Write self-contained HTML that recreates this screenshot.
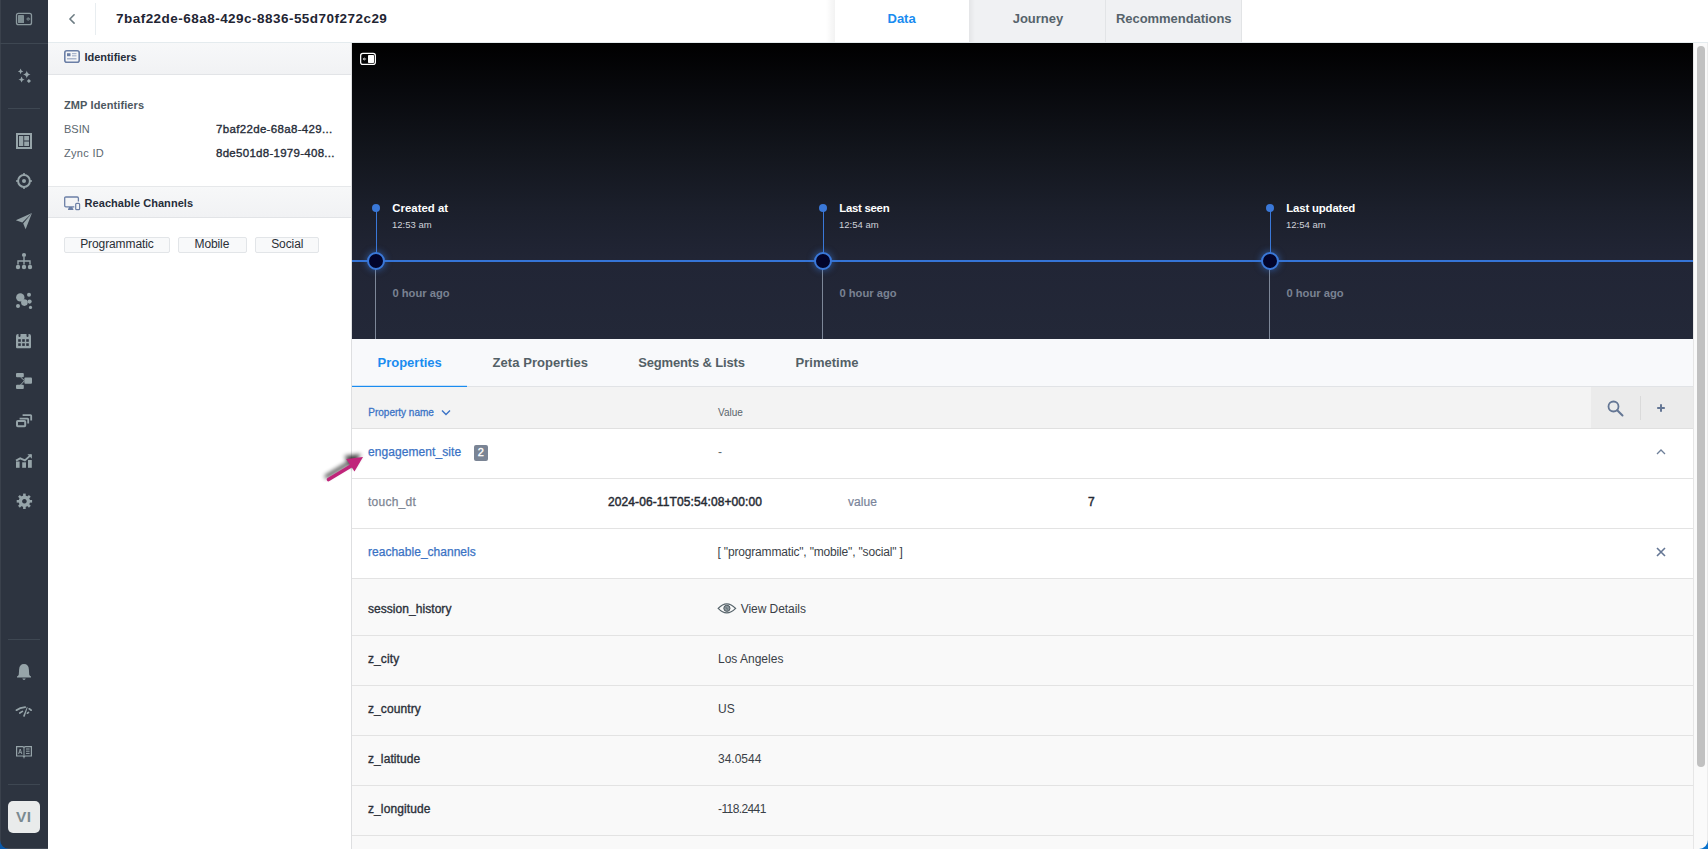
<!DOCTYPE html>
<html><head><meta charset="utf-8">
<style>
*{box-sizing:border-box;margin:0;padding:0}
html,body{width:1708px;height:849px;overflow:hidden;background:#fff;font-family:"Liberation Sans",sans-serif;position:relative}
.abs{position:absolute}
.t{position:absolute;white-space:nowrap;line-height:1}
svg{position:absolute;overflow:visible}
</style></head><body>
<div class="abs" style="left:0px;top:0px;width:48px;height:849px;background:#2d3440;"></div>
<div class="abs" style="left:0px;top:0px;width:1px;height:849px;background:#3a414c;"></div>
<div class="abs" style="left:48px;top:0px;width:1660px;height:42px;background:#fff;"></div>
<div class="abs" style="left:48px;top:42px;width:1660px;height:1px;background:#e4ebee;"></div>
<div class="abs" style="left:48px;top:43px;width:303px;height:806px;background:#fff;"></div>
<div class="abs" style="left:351px;top:43px;width:1px;height:806px;background:#dedfe1;"></div>
<div class="abs" style="left:48px;top:43px;width:303px;height:31px;background:linear-gradient(#f7f8f9,#f1f2f4);"></div>
<div class="abs" style="left:48px;top:74px;width:303px;height:1px;background:#e2e4e7;"></div>
<div class="abs" style="left:48px;top:186px;width:303px;height:31px;background:linear-gradient(#f7f8f9,#f1f2f4);"></div>
<div class="abs" style="left:48px;top:186px;width:303px;height:1px;background:#e6e8ea;"></div>
<div class="abs" style="left:48px;top:217px;width:303px;height:1px;background:#e2e4e7;"></div>
<div class="abs" style="left:352px;top:43px;width:1341px;height:296px;background:linear-gradient(#000 0%,#08090d 16%,#12151c 36%,#1b1f2b 56%,#212535 73%,#232838 100%);"></div>
<div class="abs" style="left:352px;top:339px;width:1341px;height:48px;background:#f8f9fb;"></div>
<div class="abs" style="left:352px;top:386px;width:1341px;height:1px;background:#e1e3e6;"></div>
<div class="abs" style="left:352px;top:386px;width:115px;height:1px;background:#1a8cf0;"></div>
<div class="abs" style="left:352px;top:385px;width:115px;height:1px;background:#c9e1f8;"></div>
<div class="abs" style="left:352px;top:387px;width:1341px;height:41px;background:#f3f3f3;"></div>
<div class="abs" style="left:1591px;top:387px;width:102px;height:41px;background:#ebebeb;"></div>
<div class="abs" style="left:1640px;top:396px;width:1px;height:24px;background:#dadada;"></div>
<div class="abs" style="left:352px;top:428px;width:1341px;height:1px;background:#e0e0e0;"></div>
<div class="abs" style="left:352px;top:429px;width:1341px;height:49px;background:#fff;"></div>
<div class="abs" style="left:352px;top:478px;width:1341px;height:1px;background:#e3e3e3;"></div>
<div class="abs" style="left:352px;top:479px;width:1341px;height:49px;background:#fff;"></div>
<div class="abs" style="left:352px;top:528px;width:1341px;height:1px;background:#e3e3e3;"></div>
<div class="abs" style="left:352px;top:529px;width:1341px;height:49px;background:#fff;"></div>
<div class="abs" style="left:352px;top:578px;width:1341px;height:1px;background:#e3e3e3;"></div>
<div class="abs" style="left:352px;top:579px;width:1341px;height:56px;background:#f9f9f9;"></div>
<div class="abs" style="left:352px;top:635px;width:1341px;height:1px;background:#e3e3e3;"></div>
<div class="abs" style="left:352px;top:636px;width:1341px;height:49px;background:#f9f9f9;"></div>
<div class="abs" style="left:352px;top:685px;width:1341px;height:1px;background:#e3e3e3;"></div>
<div class="abs" style="left:352px;top:686px;width:1341px;height:49px;background:#f9f9f9;"></div>
<div class="abs" style="left:352px;top:735px;width:1341px;height:1px;background:#e3e3e3;"></div>
<div class="abs" style="left:352px;top:736px;width:1341px;height:49px;background:#f9f9f9;"></div>
<div class="abs" style="left:352px;top:785px;width:1341px;height:1px;background:#e3e3e3;"></div>
<div class="abs" style="left:352px;top:786px;width:1341px;height:49px;background:#f9f9f9;"></div>
<div class="abs" style="left:352px;top:835px;width:1341px;height:1px;background:#e3e3e3;"></div>
<div class="abs" style="left:352px;top:836px;width:1341px;height:13px;background:#f9f9f9;"></div>
<div class="abs" style="left:352px;top:849px;width:1341px;height:1px;background:#e3e3e3;"></div>
<div class="abs" style="left:1693px;top:43px;width:1px;height:806px;background:#e6e6e6;"></div>
<div class="abs" style="left:1694px;top:43px;width:14px;height:806px;background:#fafafa;"></div>
<div class="abs" style="left:1707px;top:43px;width:1px;height:806px;background:#ececec;"></div>
<div class="abs" style="left:1697px;top:46px;width:8px;height:721px;background:#c1c1c1;border-radius:4px;"></div>
<svg style="left:0;top:0" width="48" height="849" viewBox="0 0 48 849"><rect x="16.5" y="13.3" width="15" height="11.4" rx="2" fill="none" stroke="#96a4a9" stroke-width="1.3" opacity="0.9"/><rect x="18" y="15.1" width="6" height="7.9" rx="0.6" fill="#7f8e93"/><path d="M26.5 19 H28.3 M27.6 17.4 L29.6 19 L27.6 20.6" fill="none" stroke="#6e7c82" stroke-width="1.3"/><rect x="0" y="43" width="48" height="1" fill="#3e4752"/><path d="M20.6 68.60000000000001 Q20.924000000000003 71.06400000000001 23.3 71.4 Q20.924000000000003 71.736 20.6 74.2 Q20.276 71.736 17.900000000000002 71.4 Q20.276 71.06400000000001 20.6 68.60000000000001Z M26.8 70.6 Q27.244 74.11999999999999 30.5 74.6 Q27.244 75.08 26.8 78.6 Q26.356 75.08 23.1 74.6 Q26.356 74.11999999999999 26.8 70.6Z M21.6 76.4 Q21.972 79.04 24.700000000000003 79.4 Q21.972 79.76 21.6 82.4 Q21.228 79.76 18.5 79.4 Q21.228 79.04 21.6 76.4Z" fill="#96a4a9"/><path d="M28.9 78.9 L31 81 L28.9 83.1 L26.8 81Z" fill="#96a4a9"/><rect x="8" y="108" width="32" height="1" fill="#3e4752"/><rect x="17" y="134" width="14" height="14" fill="none" stroke="#96a4a9" stroke-width="2"/><rect x="19" y="136" width="4.3" height="10" fill="#96a4a9"/><rect x="24.2" y="136" width="4.8" height="4.5" fill="#96a4a9"/><rect x="24.2" y="141.5" width="4.8" height="4.5" fill="#96a4a9"/><circle cx="24" cy="181" r="5.9" fill="none" stroke="#96a4a9" stroke-width="2"/><circle cx="24" cy="181" r="2" fill="#96a4a9"/><path d="M24 173 V176 M24 186 V189 M16 181 H19 M29 181 H32" stroke="#96a4a9" stroke-width="1.6"/><path d="M32 213 L15.8 220.3 L22.3 222.6Z" fill="#96a4a9"/><path d="M32 213 L23.2 223.6 L25.6 229.2Z" fill="#96a4a9"/><circle cx="24" cy="255" r="2.1" fill="#96a4a9"/><circle cx="18" cy="267" r="2.2" fill="#96a4a9"/><circle cx="24" cy="267" r="2.2" fill="#96a4a9"/><circle cx="30" cy="267" r="2.2" fill="#96a4a9"/><path d="M24 257 V264.5 M18 264.5 V261 H30 V264.5" fill="none" stroke="#96a4a9" stroke-width="1.4"/><circle cx="20.3" cy="297.4" r="4.2" fill="#96a4a9"/><circle cx="24.4" cy="302.6" r="3.3" fill="#96a4a9"/><circle cx="29" cy="294.8" r="2" fill="#96a4a9"/><circle cx="29.6" cy="301.6" r="2.1" fill="#96a4a9"/><circle cx="18" cy="306" r="2" fill="#96a4a9"/><circle cx="30.5" cy="307.4" r="1.6" fill="#96a4a9"/><path d="M16 336 Q16 334 18 334 H18.5 V336 A1 1 0 0 0 20.5 336 V334 H26.5 V336 A1 1 0 0 0 28.5 336 V334 H29 Q31 334 31 336 V347 Q31 348.2 30 348.2 H17 Q16 348.2 16 347Z" fill="#96a4a9"/><rect x="18.2" y="339.2" width="2.6" height="2.6" fill="#2d3440"/><rect x="22.2" y="339.2" width="2.6" height="2.6" fill="#2d3440"/><rect x="26.2" y="339.2" width="2.6" height="2.6" fill="#2d3440"/><rect x="18.2" y="343.3" width="2.6" height="2.6" fill="#2d3440"/><rect x="22.2" y="343.3" width="2.6" height="2.6" fill="#2d3440"/><rect x="26.2" y="343.3" width="2.6" height="2.6" fill="#2d3440"/><rect x="16" y="373" width="7.8" height="4.2" rx="1" fill="#96a4a9"/><rect x="16" y="384.8" width="7.8" height="4.2" rx="1" fill="#96a4a9"/><rect x="24.4" y="377.6" width="7.6" height="6.2" rx="1" fill="#96a4a9"/><path d="M20.5 377 L24.5 380.7 L20.5 385" fill="none" stroke="#96a4a9" stroke-width="1"/><rect x="17" y="421" width="8.2" height="5.2" rx="0.8" fill="none" stroke="#96a4a9" stroke-width="2"/><path d="M19.6 418.6 H27.6 Q28.2 418.6 28.2 419.2 V423.6" fill="none" stroke="#96a4a9" stroke-width="1.8"/><path d="M22.6 415.2 H30.6 Q31.2 415.2 31.2 415.8 V420.4" fill="none" stroke="#96a4a9" stroke-width="1.8"/><rect x="16" y="461.5" width="3.6" height="6.3" fill="#96a4a9"/><rect x="22.2" y="462.3" width="3.8" height="5.5" fill="#96a4a9"/><rect x="28" y="460" width="3.8" height="7.8" fill="#96a4a9"/><path d="M16 460.6 L20.2 458.4 L24.9 460.4 L31 454.9" fill="none" stroke="#96a4a9" stroke-width="1.9"/><path d="M27.4 454.3 H31.9 V458.8Z" fill="#96a4a9"/><rect x="23.1" y="493.6" width="2.6" height="3.6" fill="#96a4a9" transform="rotate(0 24.4 501.3)"/><rect x="23.1" y="493.6" width="2.6" height="3.6" fill="#96a4a9" transform="rotate(45 24.4 501.3)"/><rect x="23.1" y="493.6" width="2.6" height="3.6" fill="#96a4a9" transform="rotate(90 24.4 501.3)"/><rect x="23.1" y="493.6" width="2.6" height="3.6" fill="#96a4a9" transform="rotate(135 24.4 501.3)"/><rect x="23.1" y="493.6" width="2.6" height="3.6" fill="#96a4a9" transform="rotate(180 24.4 501.3)"/><rect x="23.1" y="493.6" width="2.6" height="3.6" fill="#96a4a9" transform="rotate(225 24.4 501.3)"/><rect x="23.1" y="493.6" width="2.6" height="3.6" fill="#96a4a9" transform="rotate(270 24.4 501.3)"/><rect x="23.1" y="493.6" width="2.6" height="3.6" fill="#96a4a9" transform="rotate(315 24.4 501.3)"/><path d="M24.4 495.6 A5.7 5.7 0 1 1 24.39 495.6Z M24.4 499 A2.3 2.3 0 1 0 24.41 499Z" fill="#96a4a9" fill-rule="evenodd"/><rect x="8" y="639" width="32" height="1" fill="#3e4752"/><rect x="8" y="784" width="32" height="1" fill="#3e4752"/><path d="M24 664 Q28.6 664 28.9 669.5 L29.2 674.5 Q29.6 676 31 676.6 V677.6 H17 V676.6 Q18.4 676 18.8 674.5 L19.1 669.5 Q19.4 664 24 664Z" fill="#96a4a9"/><path d="M22.3 678.6 H25.7 Q25.3 680 24 680 Q22.7 680 22.3 678.6Z" fill="#96a4a9"/><path d="M16.4 710.2 Q19.8 707.6 25.2 707.1 M29.2 708.8 L31.2 710.2 M19.8 713 L22.4 711.4 M27.4 713.2 L28.5 712.4" fill="none" stroke="#96a4a9" stroke-width="1.7" stroke-linecap="round"/><path d="M23 716.3 Q23.9 717.2 24.8 716.4 L27.6 707.4 Q27.2 706.9 26.8 707.3Z" fill="#96a4a9"/><path d="M16.6 746.6 H22.5 Q24 746.6 24 748 Q24 746.6 25.5 746.6 H31.4 V756 H25.5 Q24.3 756 24 757 Q23.7 756 22.5 756 H16.6Z" fill="none" stroke="#96a4a9" stroke-width="1.2"/><path d="M24 748 V756" stroke="#96a4a9" stroke-width="1"/><path d="M18.6 754 L20.2 749 L21.8 754 M19.2 752.3 H21.2" fill="none" stroke="#96a4a9" stroke-width="0.9"/><path d="M26 749 H29.6 M26 751.2 H29.6 M26 753.4 H29.6" stroke="#96a4a9" stroke-width="1"/></svg>
<div class="abs" style="left:8px;top:800.5px;width:32px;height:32px;background:#e9ebeb;border-radius:5px;"></div>
<div class="t" style="left:16px;top:808.80px;font-size:15.5px;color:#7a8a91;font-weight:700;letter-spacing:0.4px;">VI</div>
<svg style="left:66px;top:12px" width="12" height="14" viewBox="0 0 12 14"><path d="M8.1 2.8 L3.9 6.95 L8.1 11.1" fill="none" stroke="#6d7c83" stroke-width="1.6" stroke-linecap="round" stroke-linejoin="round"/></svg>
<div class="abs" style="left:95px;top:3px;width:1px;height:32px;background:#e8edf0;"></div>
<div class="t" style="left:116px;top:12.00px;font-size:13.5px;color:#1f2533;font-weight:700;letter-spacing:0.47px;">7baf22de-68a8-429c-8836-55d70f272c29</div>
<div class="abs" style="left:826px;top:0px;width:9px;height:42px;background:linear-gradient(to right,rgba(0,0,0,0),rgba(0,0,0,0.05));"></div>
<div class="abs" style="left:835px;top:0px;width:134px;height:42px;background:#fff;"></div>
<div class="abs" style="left:969px;top:0px;width:272px;height:42px;background:#f0f1f3;"></div>
<div class="abs" style="left:969px;top:0px;width:6px;height:42px;background:linear-gradient(to right,rgba(0,0,0,0.05),rgba(0,0,0,0));"></div>
<div class="abs" style="left:1105px;top:0px;width:1px;height:42px;background:#e2e4e6;"></div>
<div class="abs" style="left:1241px;top:0px;width:1px;height:42px;background:#e2e4e6;"></div>
<div class="t" style="left:887.5px;top:11.80px;font-size:13px;color:#1a8cf0;font-weight:700;">Data</div>
<div class="t" style="left:1012.7px;top:11.80px;font-size:13px;color:#56636b;font-weight:700;">Journey</div>
<div class="t" style="left:1116px;top:11.80px;font-size:13px;color:#56636b;font-weight:700;letter-spacing:-0.05px;">Recommendations</div>
<svg style="left:64px;top:50px" width="16" height="13" viewBox="0 0 16 13"><rect x="0.8" y="0.8" width="14.4" height="11.4" rx="2" fill="none" stroke="#6b7fa6" stroke-width="1.6"/><rect x="3" y="3.2" width="3.5" height="3" fill="#6b7fa6"/><rect x="8" y="3" width="4.5" height="1.2" fill="#a9b5cc"/><rect x="8" y="5.2" width="4.5" height="1.2" fill="#a9b5cc"/><rect x="3" y="8" width="9.5" height="1.5" fill="#a9b5cc"/></svg>
<div class="t" style="left:84.6px;top:52.00px;font-size:11px;color:#262d3a;font-weight:700;letter-spacing:-0.05px;">Identifiers</div>
<div class="t" style="left:64px;top:100.00px;font-size:11px;color:#4d5860;font-weight:700;letter-spacing:0.1px;">ZMP Identifiers</div>
<div class="t" style="left:64px;top:124.00px;font-size:11px;color:#5c676f;">BSIN</div>
<div class="t" style="left:216px;top:123.50px;font-size:11.5px;color:#262c38;letter-spacing:0.33px;-webkit-text-stroke:0.35px #262c38;">7baf22de-68a8-429...</div>
<div class="t" style="left:64px;top:148.30px;font-size:11px;color:#5c676f;letter-spacing:0.3px;">Zync ID</div>
<div class="t" style="left:216px;top:148.00px;font-size:11.5px;color:#262c38;letter-spacing:0.28px;-webkit-text-stroke:0.35px #262c38;">8de501d8-1979-408...</div>
<svg style="left:64px;top:196px" width="17" height="15" viewBox="0 0 17 15"><path d="M10.3 10.8 H1.9 Q0.7 10.8 0.7 9.6 V2.2 Q0.7 1 1.9 1 H13.2 Q14.4 1 14.4 2.2 V5.6" fill="none" stroke="#6b7fa6" stroke-width="1.3"/><path d="M5 11 H8.4 L8.9 13 H4.5Z" fill="#6b7fa6"/><rect x="4" y="12.6" width="5.4" height="1.3" rx="0.5" fill="#6b7fa6"/><rect x="11.7" y="7.3" width="3.9" height="6.4" rx="1" fill="none" stroke="#6b7fa6" stroke-width="1.2"/></svg>
<div class="t" style="left:84.6px;top:198.00px;font-size:11px;color:#262d3a;font-weight:700;letter-spacing:0.05px;">Reachable Channels</div>
<div class="abs" style="left:64px;top:237px;width:106px;height:16px;background:#f8f9fa;border:1px solid #e2e5e8;border-radius:2px;"></div>
<div class="t" style="left:80.2px;top:238.00px;font-size:12px;color:#2a2f36;letter-spacing:-0.1px;">Programmatic</div>
<div class="abs" style="left:178px;top:237px;width:69px;height:16px;background:#f8f9fa;border:1px solid #e2e5e8;border-radius:2px;"></div>
<div class="t" style="left:194.5px;top:238.00px;font-size:12px;color:#2a2f36;letter-spacing:-0.1px;">Mobile</div>
<div class="abs" style="left:255px;top:237px;width:64px;height:16px;background:#f8f9fa;border:1px solid #e2e5e8;border-radius:2px;"></div>
<div class="t" style="left:271.2px;top:238.00px;font-size:12px;color:#2a2f36;letter-spacing:-0.1px;">Social</div>
<div class="abs" style="left:352px;top:260px;width:1341px;height:2px;background:#3574d6;"></div>
<div class="abs" style="left:376px;top:208px;width:1px;height:52px;background:#3a78d8;"></div>
<div class="abs" style="left:375px;top:262px;width:1px;height:77px;background:#7d8798;"></div>
<div class="abs" style="left:372px;top:204px;width:8px;height:8px;border-radius:50%;background:#3a78d8"></div>
<div class="abs" style="left:367px;top:252px;width:18px;height:18px;border-radius:50%;background:#02042a;border:2px solid #3a78d8;box-shadow:0 0 6px 1px rgba(58,120,216,0.5)"></div>
<div class="t" style="left:392.3px;top:203.00px;font-size:11.4px;color:#ffffff;font-weight:700;">Created at</div>
<div class="t" style="left:392px;top:220.10px;font-size:9.5px;color:#cfd2d9;">12:53 am</div>
<div class="t" style="left:392.4px;top:287.80px;font-size:11.2px;color:#7a8292;font-weight:700;">0 hour ago</div>
<div class="abs" style="left:823px;top:208px;width:1px;height:52px;background:#3a78d8;"></div>
<div class="abs" style="left:822px;top:262px;width:1px;height:77px;background:#7d8798;"></div>
<div class="abs" style="left:819px;top:204px;width:8px;height:8px;border-radius:50%;background:#3a78d8"></div>
<div class="abs" style="left:814px;top:252px;width:18px;height:18px;border-radius:50%;background:#02042a;border:2px solid #3a78d8;box-shadow:0 0 6px 1px rgba(58,120,216,0.5)"></div>
<div class="t" style="left:839.3px;top:203.00px;font-size:11.4px;color:#ffffff;font-weight:700;letter-spacing:-0.28px;">Last seen</div>
<div class="t" style="left:839px;top:220.10px;font-size:9.5px;color:#cfd2d9;">12:54 am</div>
<div class="t" style="left:839.4px;top:287.80px;font-size:11.2px;color:#7a8292;font-weight:700;">0 hour ago</div>
<div class="abs" style="left:1270px;top:208px;width:1px;height:52px;background:#3a78d8;"></div>
<div class="abs" style="left:1269px;top:262px;width:1px;height:77px;background:#7d8798;"></div>
<div class="abs" style="left:1266px;top:204px;width:8px;height:8px;border-radius:50%;background:#3a78d8"></div>
<div class="abs" style="left:1261px;top:252px;width:18px;height:18px;border-radius:50%;background:#02042a;border:2px solid #3a78d8;box-shadow:0 0 6px 1px rgba(58,120,216,0.5)"></div>
<div class="t" style="left:1286.3px;top:203.00px;font-size:11.4px;color:#ffffff;font-weight:700;letter-spacing:-0.17px;">Last updated</div>
<div class="t" style="left:1286px;top:220.10px;font-size:9.5px;color:#cfd2d9;">12:54 am</div>
<div class="t" style="left:1286.4px;top:287.80px;font-size:11.2px;color:#7a8292;font-weight:700;">0 hour ago</div>
<svg style="left:360px;top:52px" width="17" height="14" viewBox="0 0 17 14"><rect x="0.65" y="1.45" width="14.7" height="10.9" rx="2.2" fill="none" stroke="#fff" stroke-width="1.25"/><rect x="8" y="3" width="6" height="8" rx="0.7" fill="#fff"/><path d="M2.6 7 L4.6 5.2 V8.8Z" fill="#ddd"/><path d="M4.4 7 H6.2" stroke="#999" stroke-width="1.4"/></svg>
<div class="t" style="left:377.5px;top:355.90px;font-size:13px;color:#1a8cf0;font-weight:700;">Properties</div>
<div class="t" style="left:492.6px;top:355.90px;font-size:13px;color:#536066;font-weight:700;letter-spacing:0.05px;">Zeta Properties</div>
<div class="t" style="left:638.2px;top:355.90px;font-size:13px;color:#536066;font-weight:700;letter-spacing:-0.15px;">Segments &amp; Lists</div>
<div class="t" style="left:795.6px;top:355.90px;font-size:13px;color:#536066;font-weight:700;">Primetime</div>
<div class="t" style="left:368.3px;top:408.20px;font-size:10px;color:#3b73c6;-webkit-text-stroke:0.3px #3b73c6;">Property name</div>
<svg style="left:441px;top:409px" width="10" height="7" viewBox="0 0 10 7"><path d="M1 1.5 L5 5.5 L9 1.5" fill="none" stroke="#3b73c6" stroke-width="1.4"/></svg>
<div class="t" style="left:718px;top:408.20px;font-size:10px;color:#5a646b;">Value</div>
<svg style="left:1607px;top:400px" width="17" height="17" viewBox="0 0 17 17"><circle cx="6.5" cy="6.5" r="5" fill="none" stroke="#647694" stroke-width="1.8"/><path d="M10.2 10.2 L15.5 15.5" stroke="#647694" stroke-width="2" stroke-linecap="round"/></svg>
<svg style="left:1656px;top:403px" width="10" height="10" viewBox="0 0 10 10"><path d="M5 1.2 V8.8 M1.2 5 H8.8" stroke="#647694" stroke-width="2"/></svg>
<div class="t" style="left:368px;top:446.00px;font-size:12px;color:#3a72c4;letter-spacing:0.08px;-webkit-text-stroke:0.25px #3a72c4;">engagement_site</div>
<div class="abs" style="left:474px;top:445px;width:14px;height:16px;background:#7a8494;border-radius:2px;"></div>
<div class="t" style="left:477.8px;top:447.00px;font-size:11px;color:#fff;-webkit-text-stroke:0.35px #fff;">2</div>
<div class="t" style="left:718px;top:446.00px;font-size:12px;color:#5d666d;">-</div>
<svg style="left:1656px;top:449px" width="10" height="6" viewBox="0 0 10 6"><path d="M1 5 L5 1 L9 5" fill="none" stroke="#6e7f99" stroke-width="1.3"/></svg>
<div class="t" style="left:368px;top:496.00px;font-size:12px;color:#7d8593;letter-spacing:0.25px;-webkit-text-stroke:0.25px #7d8593;">touch_dt</div>
<div class="t" style="left:608px;top:496.00px;font-size:12px;color:#262a33;letter-spacing:0.1px;-webkit-text-stroke:0.45px #262a33;">2024-06-11T05:54:08+00:00</div>
<div class="t" style="left:848px;top:496.00px;font-size:12px;color:#7a849a;letter-spacing:0.05px;-webkit-text-stroke:0.2px #7a849a;">value</div>
<div class="t" style="left:1088px;top:496.00px;font-size:12px;color:#262a33;-webkit-text-stroke:0.45px #262a33;">7</div>
<div class="t" style="left:368px;top:546.00px;font-size:12px;color:#3a72c4;letter-spacing:0.02px;-webkit-text-stroke:0.25px #3a72c4;">reachable_channels</div>
<div class="t" style="left:717.5px;top:546.00px;font-size:12px;color:#3a3f47;letter-spacing:-0.17px;">[ &quot;programmatic&quot;, &quot;mobile&quot;, &quot;social&quot; ]</div>
<svg style="left:1656px;top:547px" width="10" height="10" viewBox="0 0 10 10"><path d="M1 1 L9 9 M9 1 L1 9" stroke="#647694" stroke-width="1.6"/></svg>
<div class="t" style="left:368px;top:603.00px;font-size:12px;color:#2b3039;letter-spacing:0.05px;-webkit-text-stroke:0.35px #2b3039;">session_history</div>
<svg style="left:717px;top:602px" width="20" height="14" viewBox="0 0 20 14"><path d="M1.2 6.4 Q9.7 -2.6 18.6 6.4 Q9.7 15.4 1.2 6.4Z" fill="none" stroke="#56636a" stroke-width="1.25"/><circle cx="9.9" cy="6.3" r="3.1" fill="#8a959b" stroke="#4f5b61" stroke-width="1"/><path d="M8.6 5.2 L10.9 7.4" stroke="#4f5b61" stroke-width="0.8"/></svg>
<div class="t" style="left:740.7px;top:603.00px;font-size:12px;color:#3a3f47;letter-spacing:-0.05px;">View Details</div>
<div class="t" style="left:368px;top:653.00px;font-size:12px;color:#2b3039;letter-spacing:0.1px;-webkit-text-stroke:0.35px #2b3039;">z_city</div>
<div class="t" style="left:718px;top:653.00px;font-size:12px;color:#3a3f47;">Los Angeles</div>
<div class="t" style="left:368px;top:703.00px;font-size:12px;color:#2b3039;letter-spacing:0.1px;-webkit-text-stroke:0.35px #2b3039;">z_country</div>
<div class="t" style="left:718px;top:703.00px;font-size:12px;color:#3a3f47;">US</div>
<div class="t" style="left:368px;top:753.00px;font-size:12px;color:#2b3039;letter-spacing:0.1px;-webkit-text-stroke:0.35px #2b3039;">z_latitude</div>
<div class="t" style="left:718px;top:753.00px;font-size:12px;color:#3a3f47;">34.0544</div>
<div class="t" style="left:368px;top:803.00px;font-size:12px;color:#2b3039;letter-spacing:0.1px;-webkit-text-stroke:0.35px #2b3039;">z_longitude</div>
<div class="t" style="left:718px;top:803.00px;font-size:12px;color:#3a3f47;letter-spacing:-0.6px;">-118.2441</div>
<svg style="left:315px;top:440px" width="60" height="50" viewBox="0 0 60 50">
<defs><filter id="sh" x="-50%" y="-50%" width="200%" height="200%"><feGaussianBlur stdDeviation="2"/></filter></defs>
<g transform="translate(-2,-3)" filter="url(#sh)" opacity="0.75"><path d="M13.5 39.5 L41 23" stroke="#000" stroke-width="3.6" stroke-linecap="round"/><path d="M48 17 L31.2 19.1 L39.5 31.5Z" fill="#000"/></g>
<path d="M13.5 39.5 L41 23" stroke="#c0247a" stroke-width="3.6" stroke-linecap="round"/><path d="M48 17 L31.2 19.1 L39.5 31.5Z" fill="#c0247a"/>
</svg>
<div class="abs" style="left:0px;top:848px;width:48px;height:1px;background:#434a56;"></div>
<svg style="left:0;top:840px" width="9" height="9" viewBox="0 0 9 9"><path d="M0 0 A9 9 0 0 0 9 9 H0Z" fill="#0a58a8"/></svg>
<svg style="left:1699px;top:840px" width="9" height="9" viewBox="0 0 9 9"><path d="M9 0 A9 9 0 0 1 0 9 H9Z" fill="#0a72cc"/></svg>
</body></html>
